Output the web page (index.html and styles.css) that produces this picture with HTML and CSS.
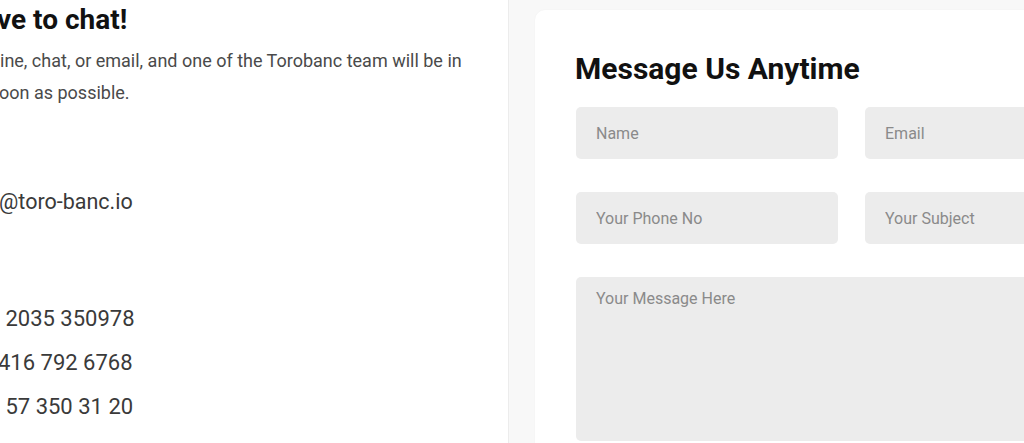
FILE: index.html
```html
<!DOCTYPE html>
<html lang="en">
<head>
    <meta charset="UTF-8">
    <meta name="viewport" content="width=device-width, initial-scale=1.0">
    <title>Contact Torobanc</title>
    <link rel="stylesheet" href="styles.css">
</head>
<body>
    <div class="contact-page">
        <!-- Left: contact details (scrolled partly out of view) -->
        <div class="contact-info">
            <h2 class="chat-title">ve to chat!</h2>
            <p class="chat-intro">
                <span class="intro-line first">ine, chat, or email, and one of the Torobanc team will be in</span>
                <span class="intro-line second">oon as possible.</span>
            </p>

            <div class="contact-email">@toro-banc.io</div>

            <ul class="phone-list">
                <li class="phone gb">&nbsp;2035 350978</li>
                <li class="phone ca">416 792 6768</li>
                <li class="phone es">&nbsp;57 350 31 20</li>
            </ul>
        </div>

        <!-- Right: message form -->
        <div class="form-side">
            <div class="form-card">
                <h2 class="form-title">Message Us Anytime</h2>
                <form class="message-form">
                    <div class="form-row">
                        <input class="field" type="text" placeholder="Name">
                        <input class="field" type="email" placeholder="Email">
                    </div>
                    <div class="form-row">
                        <input class="field" type="text" placeholder="Your Phone No">
                        <input class="field" type="text" placeholder="Your Subject">
                    </div>
                    <textarea class="field message" placeholder="Your Message Here"></textarea>
                </form>
            </div>
        </div>
    </div>
</body>
</html>
```

FILE: styles.css
```css
/* General Styling */
html, body {
    margin: 0;
    padding: 0;
    height: 100%;
    overflow: hidden;
}

body {
    font-family: 'Roboto', 'Liberation Sans', sans-serif;
    background-color: #ffffff;
    color: #333333;
}

.contact-page {
    display: flex;
    height: 100%;
}

/* Left column */
.contact-info {
    width: 508px;
    flex-shrink: 0;
    border-right: 1px solid #ececec;
    overflow: hidden;
    white-space: nowrap;
}

.chat-title {
    margin: 4px 0 0 -3px;
    font-size: 28px;
    font-weight: 700;
    line-height: 32px;
    color: #111111;
}

.chat-intro {
    margin: 9px 0 0 0;
    font-size: 18px;
    line-height: 32px;
    color: #4a4a4a;
}

.intro-line {
    display: block;
}

.intro-line.second {
    margin-left: -1px;
}

.contact-email {
    margin: 77px 0 0 -1px;
    font-size: 21.5px;
    line-height: 32px;
    color: #3a3a3a;
}

.phone-list {
    list-style: none;
    margin: 79px 0 0 0;
    padding: 0;
}

.phone {
    font-size: 22px;
    line-height: 44px;
    color: #3a3a3a;
}

.phone.ca {
    margin-left: -2px;
}

/* Right column */
.form-side {
    flex: 1;
    background-color: #f8f8f8;
    padding: 10px 0 0 26px;
    overflow: hidden;
}

.form-card {
    width: 620px;
    min-height: 500px;
    background-color: #ffffff;
    border-radius: 10px;
    padding: 36px 41px;
    box-shadow: 0 0 2px rgba(0, 0, 0, 0.04);
}

.form-title {
    margin: 3px 0 18px -1px;
    font-size: 30px;
    font-weight: 700;
    line-height: 40px;
    color: #111111;
}

.message-form {
    display: flex;
    flex-direction: column;
    gap: 33px;
}

.form-row {
    display: flex;
    gap: 27px;
}

.field {
    box-sizing: border-box;
    width: 262px;
    height: 52px;
    padding: 0 20px;
    border: none;
    border-radius: 5px;
    background-color: #ececec;
    font-family: 'Roboto', 'Liberation Sans', sans-serif;
    font-size: 16px;
    color: #333333;
    outline: none;
}

.field::placeholder {
    color: #8a8a8a;
}

.message {
    width: 560px;
    height: 164px;
    padding: 12px 20px;
    resize: none;
}
```
